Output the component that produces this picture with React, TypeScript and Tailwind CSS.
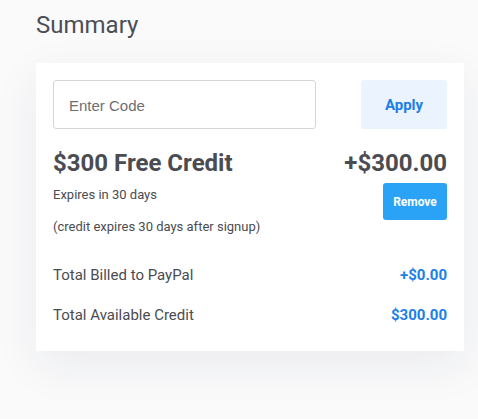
export default function App() {
  return (
    <div className="min-h-[419px] w-full bg-[#fafafb] px-[36px] pb-10 font-['Roboto',sans-serif] text-[#4a4c52]">
      <h1 className="pt-[11px] text-[24px] leading-[28px] font-normal text-[#4c4e55]">Summary</h1>

      <div className="mt-[24px] w-[428px] bg-white p-[17px] pb-[26px] shadow-[0_14px_44px_rgba(30,40,60,0.07)]">
        <div className="flex items-stretch justify-between">
          <input
            type="text"
            placeholder="Enter Code"
            className="h-[49px] w-[263px] rounded-[3px] border border-[#d6d6d8] px-[15px] pt-[2px] font-['Liberation_Sans',sans-serif] text-[15px] text-[#555] placeholder:text-[#6e6e70] outline-none"
          />
          <button className="h-[49px] w-[86px] rounded-[3px] bg-[#ebf3fe] pt-[2px] text-[15px] font-bold text-[#1b7fe6]">
            Apply
          </button>
        </div>

        <div className="mt-[20px] flex justify-between">
          <div className="flex flex-col">
            <div className="text-[24px] leading-[28px] font-bold text-[#4a4c52]">$300 Free Credit</div>
            <div className="mt-[8px] text-[13px] leading-[20px]">Expires in 30 days</div>
            <div className="mt-[12px] text-[13px] leading-[20px]">(credit expires 30 days after signup)</div>
          </div>
          <div className="flex flex-col items-end">
            <div className="text-[24px] leading-[28px] font-bold text-[#4a4c52]">+$300.00</div>
            <button className="mt-[6px] h-[37px] w-[64px] rounded-[3px] bg-[#2aa3f6] text-[12px] font-bold text-white">
              Remove
            </button>
          </div>
        </div>

        <div className="mt-[28px] flex flex-col gap-[20px] text-[15px] leading-[20px]">
          <div className="flex items-center justify-between">
            <span>Total Billed to PayPal</span>
            <span className="font-bold text-[#1b80e8]">+$0.00</span>
          </div>
          <div className="flex items-center justify-between">
            <span>Total Available Credit</span>
            <span className="font-bold text-[#1b80e8]">$300.00</span>
          </div>
        </div>
      </div>
    </div>
  )
}
